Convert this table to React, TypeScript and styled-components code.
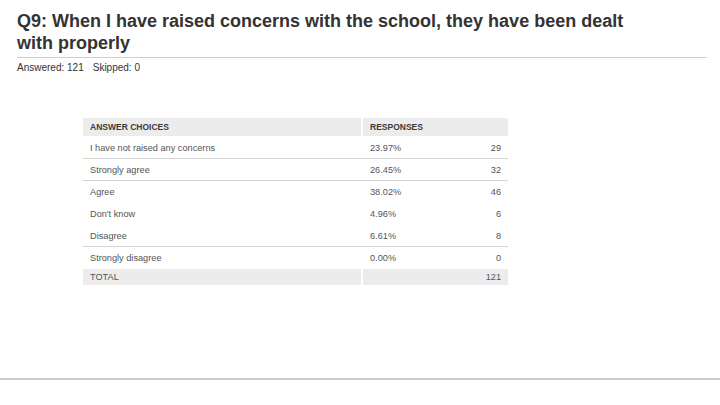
import React from "react";
import styled, { createGlobalStyle } from "styled-components";

const Global = createGlobalStyle`
  html, body { margin: 0; padding: 0; background: #fff; }
  body { font-family: "Liberation Sans", Arial, sans-serif; }
`;

const Page = styled.div`
  width: 720px;
  height: 405px;
  display: flex;
  flex-direction: column;
  box-sizing: border-box;
  padding-top: 10px;
  overflow: hidden;
`;

const Header = styled.div`
  padding: 0 13px 0 17px;
`;

const Title = styled.h1`
  margin: 0;
  font-size: 18px;
  line-height: 22px;
  font-weight: bold;
  color: #333;
  max-width: 625px;
`;

const Rule = styled.div`
  margin-top: 3px;
  height: 1px;
  background: #cfcfcf;
`;

const Meta = styled.div`
  margin-top: 4px;
  display: flex;
  gap: 9px;
  font-size: 10px;
  line-height: 12px;
  color: #333;
`;

const Table = styled.div`
  margin: 44px 0 0 83px;
  width: 425px;
  font-size: 9.2px;
  color: #555;
`;

const Row = styled.div<{ $kind?: "head" | "total"; $line?: boolean }>`
  display: grid;
  grid-template-columns: 278px 145px;
  column-gap: 2px;
  height: ${(p) => (p.$kind === "head" ? 19 : p.$kind === "total" ? 17 : 22)}px;
  box-sizing: border-box;
  border-bottom: 1px solid ${(p) => (p.$line ? "#d4d4d4" : "transparent")};
`;

const Cell = styled.div<{ $shade?: boolean }>`
  display: flex;
  align-items: center;
  justify-content: space-between;
  padding: 0 7px;
  background: ${(p) => (p.$shade ? "#ececec" : "transparent")};
`;

const HeadText = styled.span`
  font-weight: bold;
  color: #3a3a3a;
  font-size: 8.5px;
`;

const BottomLine = styled.div`
  margin-top: auto;
  margin-bottom: 25px;
  height: 2px;
  background: #cccccc;
`;

const rows = [
  { label: "I have not raised any concerns", pct: "23.97%", n: "29", line: true },
  { label: "Strongly agree", pct: "26.45%", n: "32", line: true },
  { label: "Agree", pct: "38.02%", n: "46", line: false },
  { label: "Don't know", pct: "4.96%", n: "6", line: false },
  { label: "Disagree", pct: "6.61%", n: "8", line: true },
  { label: "Strongly disagree", pct: "0.00%", n: "0", line: false },
];

export default function App() {
  return (
    <Page>
      <Global />
      <Header>
        <Title>Q9: When I have raised concerns with the school, they have been dealt with properly</Title>
        <Rule />
        <Meta>
          <span>Answered: 121</span>
          <span>Skipped: 0</span>
        </Meta>
      </Header>
      <Table>
        <Row $kind="head">
          <Cell $shade><HeadText>ANSWER CHOICES</HeadText></Cell>
          <Cell $shade><HeadText>RESPONSES</HeadText></Cell>
        </Row>
        {rows.map((r) => (
          <Row key={r.label} $line={r.line}>
            <Cell>{r.label}</Cell>
            <Cell>
              <span>{r.pct}</span>
              <span>{r.n}</span>
            </Cell>
          </Row>
        ))}
        <Row $kind="total">
          <Cell $shade>TOTAL</Cell>
          <Cell $shade>
            <span />
            <span>121</span>
          </Cell>
        </Row>
      </Table>
      <BottomLine />
    </Page>
  );
}
